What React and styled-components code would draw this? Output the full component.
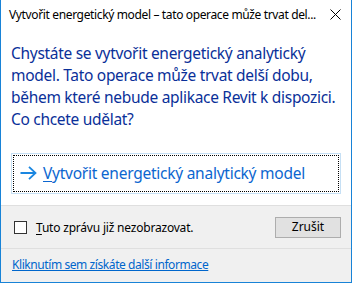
import React from "react";
import styled, { createGlobalStyle } from "styled-components";

const Global = createGlobalStyle`
  html, body { margin: 0; padding: 0; background: #ffffff; }
  * { box-sizing: border-box; }
`;

const FONT = `"Noto Sans", "Open Sans", sans-serif`;

const Window = styled.div`
  width: 352px;
  height: 283px;
  display: flex;
  flex-direction: column;
  background: #ffffff;
  border: 1px solid #1883d7;
  border-top: none;
  font-family: ${FONT};
  overflow: hidden;
`;

const TitleBar = styled.div`
  height: 31px;
  flex: none;
  display: flex;
  align-items: center;
  padding: 0 10px 0 8px;
  gap: 8px;
`;

const Title = styled.div`
  flex: 1;
  font-size: 12px;
  color: #000000;
  white-space: nowrap;
  letter-spacing: -0.36px;
  padding-bottom: 2px;
`;

const CloseBtn = styled.div`
  width: 11px;
  height: 11px;
  display: flex;
  margin-bottom: 3px;
`;

const Body = styled.div`
  flex: 1;
  display: flex;
  flex-direction: column;
  padding: 11px 10px 0 10px;
`;

const Instruction = styled.div`
  font-size: 15.5px;
  line-height: 22px;
  color: #0a3099;
  letter-spacing: -0.3px;
  white-space: nowrap;
`;

const CommandLink = styled.div`
  margin-top: 23px;
  height: 41px;
  border: 1px solid #c6e0f5;
  padding: 1px;
`;

const FocusRect = styled.div`
  height: 100%;
  border: 1px dotted #000000;
  display: flex;
  align-items: center;
  gap: 6px;
  padding: 0 0 2px 6px;
`;

const Arrow = styled.svg`
  width: 17px;
  height: 14px;
  flex: none;
`;

const LinkLabel = styled.span`
  font-size: 15.5px;
  color: #0c66d0;
  letter-spacing: -0.25px;
  white-space: nowrap;
`;

const Accel = styled.span`
  text-decoration: underline;
  text-underline-offset: 2px;
`;

const Footer = styled.div`
  height: 77px;
  flex: none;
  background: #f0f0f0;
  border-top: 1px solid #dfdfdf;
  display: flex;
  flex-direction: column;
`;

const FooterRow = styled.div`
  height: 43px;
  display: flex;
  align-items: center;
  padding: 0 10px 0 13px;
  border-bottom: 1px solid #dfdfdf;
`;

const Check = styled.div`
  width: 13px;
  height: 13px;
  border: 1px solid #333333;
  background: #ffffff;
  flex: none;
`;

const CheckLabel = styled.span`
  margin-left: 9px;
  flex: 1;
  font-size: 12px;
  color: #000000;
  letter-spacing: -0.2px;
  white-space: nowrap;
`;

const Button = styled.div`
  width: 66px;
  height: 21px;
  background: #e1e1e1;
  border: 1px solid #adadad;
  display: flex;
  align-items: center;
  justify-content: center;
  font-size: 12px;
  color: #000000;
  padding-bottom: 1px;
`;

const InfoRow = styled.div`
  flex: 1;
  display: flex;
  align-items: center;
  padding: 0 10px 2px 11px;
`;

const InfoLink = styled.a`
  font-size: 12px;
  color: #0066cc;
  text-decoration: underline;
  letter-spacing: -0.42px;
  white-space: nowrap;
`;

export default function App() {
  return (
    <>
      <Global />
      <Window>
        <TitleBar>
          <Title>Vytvořit energetický model – tato operace může trvat del...</Title>
          <CloseBtn>
            <svg width="11" height="11" viewBox="0 0 11 11">
              <path d="M0.5 0.5 L10.5 10.5 M10.5 0.5 L0.5 10.5" stroke="#000" strokeWidth="1" fill="none" />
            </svg>
          </CloseBtn>
        </TitleBar>
        <Body>
          <Instruction>
            Chystáte se vytvořit energetický analytický
            <br />
            model. Tato operace může trvat delší dobu,
            <br />
            během které nebude aplikace Revit k dispozici.
            <br />
            Co chcete udělat?
          </Instruction>
          <CommandLink>
            <FocusRect>
              <Arrow viewBox="0 0 17 14">
                <path d="M0.5 7 H15.5 M9 0.8 L15.5 7 L9 13.2" stroke="#1a86e0" strokeWidth="1.8" fill="none" />
              </Arrow>
              <LinkLabel>
                <Accel>V</Accel>ytvořit energetický analytický model
              </LinkLabel>
            </FocusRect>
          </CommandLink>
        </Body>
        <Footer>
          <FooterRow>
            <Check />
            <CheckLabel>
              <Accel>T</Accel>uto zprávu již nezobrazovat.
            </CheckLabel>
            <Button>Zrušit</Button>
          </FooterRow>
          <InfoRow>
            <InfoLink href="#">Kliknutím sem získáte další informace</InfoLink>
          </InfoRow>
        </Footer>
      </Window>
    </>
  );
}
